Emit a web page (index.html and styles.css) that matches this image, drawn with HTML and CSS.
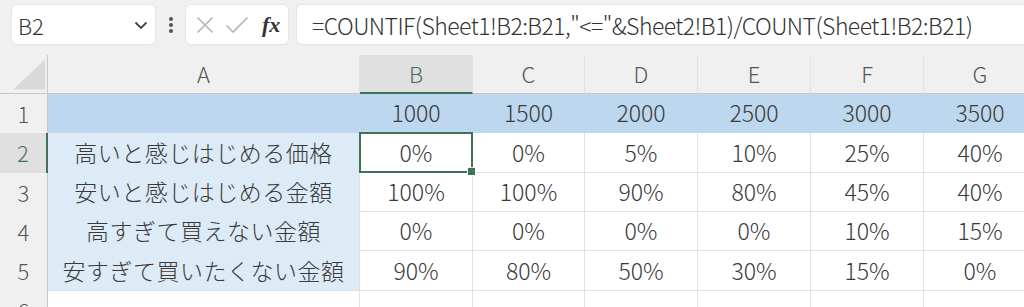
FILE: index.html
```html
<!DOCTYPE html>
<html lang="ja">
<head>
  <meta charset="UTF-8">
  <title>Sheet2</title>
  <link rel="stylesheet" href="styles.css">
</head>
<body>
  <div class="toolbar">
    <div class="namebox">
      <span class="cell-ref">B2</span>
      <svg class="chevron" width="14" height="9" viewBox="0 0 14 9"><path d="M1.5 1.5 L7 7 L12.5 1.5" fill="none" stroke="#444" stroke-width="1.8"/></svg>
    </div>
    <div class="more">
      <svg width="6" height="18" viewBox="0 0 6 18"><circle cx="3" cy="3" r="2" fill="#555"/><circle cx="3" cy="9" r="2" fill="#555"/><circle cx="3" cy="15" r="2" fill="#555"/></svg>
    </div>
    <div class="fxbox">
      <svg width="18" height="18" viewBox="0 0 18 18"><path d="M1.5 1.5 L16.5 16.5 M16.5 1.5 L1.5 16.5" stroke="#b5b5b5" stroke-width="1.6"/></svg>
      <svg width="24" height="18" viewBox="0 0 24 18"><path d="M1.5 9.5 L8 16 L22.5 1.5" fill="none" stroke="#b5b5b5" stroke-width="1.6"/></svg>
      <span class="fx">fx</span>
    </div>
    <div class="formula">=COUNTIF(Sheet1!B2:B21,"&lt;="&amp;Sheet2!B1)/COUNT(Sheet1!B2:B21)</div>
  </div>

  <div class="sheet">
    <div class="corner">
      <svg width="33" height="31" viewBox="0 0 33 31"><polygon points="33,0 33,31 0,31" fill="#d9d9d9"/></svg>
    </div>
    <div class="colhead">A</div>
    <div class="colhead selected">B</div>
    <div class="colhead">C</div>
    <div class="colhead">D</div>
    <div class="colhead">E</div>
    <div class="colhead">F</div>
    <div class="colhead">G</div>

    <div class="rowhead">1</div>
    <div class="cell band"></div>
    <div class="cell band">1000</div>
    <div class="cell band">1500</div>
    <div class="cell band">2000</div>
    <div class="cell band">2500</div>
    <div class="cell band">3000</div>
    <div class="cell band">3500</div>

    <div class="rowhead selected">2</div>
    <div class="cell label">高いと感じはじめる価格</div>
    <div class="cell active">0%</div>
    <div class="cell">0%</div>
    <div class="cell">5%</div>
    <div class="cell">10%</div>
    <div class="cell">25%</div>
    <div class="cell">40%</div>

    <div class="rowhead">3</div>
    <div class="cell label">安いと感じはじめる金額</div>
    <div class="cell">100%</div>
    <div class="cell">100%</div>
    <div class="cell">90%</div>
    <div class="cell">80%</div>
    <div class="cell">45%</div>
    <div class="cell">40%</div>

    <div class="rowhead">4</div>
    <div class="cell label">高すぎて買えない金額</div>
    <div class="cell">0%</div>
    <div class="cell">0%</div>
    <div class="cell">0%</div>
    <div class="cell">0%</div>
    <div class="cell">10%</div>
    <div class="cell">15%</div>

    <div class="rowhead">5</div>
    <div class="cell label last">安すぎて買いたくない金額</div>
    <div class="cell">90%</div>
    <div class="cell">80%</div>
    <div class="cell">50%</div>
    <div class="cell">30%</div>
    <div class="cell">15%</div>
    <div class="cell">0%</div>

    <div class="rowhead">6</div>
    <div class="cell"></div>
    <div class="cell"></div>
    <div class="cell"></div>
    <div class="cell"></div>
    <div class="cell"></div>
    <div class="cell"></div>
    <div class="cell"></div>
  </div>
</body>
</html>
```

FILE: styles.css
```css
:root {
  --grid: #e1e1e1;
  --head-bg: #f0f0f0;
  --text: #3a3a3a;
  --green: #3f7356;
}

body {
  margin: 0;
  width: 1024px;
  height: 307px;
  overflow: hidden;
  background: var(--head-bg);
  font-family: "Noto Sans CJK JP", "Noto Sans", sans-serif;
  font-weight: 300;
  color: var(--text);
}

/* formula bar */
.toolbar {
  display: flex;
  align-items: center;
  height: 39px;
  padding: 5px 0 11px 12px;
}

.namebox,
.fxbox,
.formula {
  height: 39px;
  box-sizing: border-box;
  background: #fff;
  border-radius: 5px;
  box-shadow: 0 0 0 1px #e6e6e6, 0 1px 2px rgba(0, 0, 0, 0.06);
  display: flex;
  align-items: center;
}

.namebox {
  width: 143px;
  padding: 0 7px 0 6px;
  justify-content: space-between;
}

.cell-ref {
  font-size: 22px;
  color: #333;
}

.chevron {
  margin-top: 2px;
}

.more {
  width: 31px;
  display: flex;
  justify-content: center;
}

.fxbox {
  width: 102px;
  padding: 0 6px 0 10px;
  gap: 11px;
}

.fx {
  font-family: "Liberation Serif", "DejaVu Serif", serif;
  font-style: italic;
  font-weight: bold;
  font-size: 22px;
  color: #333;
  margin-left: 2px;
}

.formula {
  flex: 1;
  margin-left: 9px;
  margin-right: -10px;
  padding-left: 15px;
  font-size: 23px;
  color: #333;
  white-space: nowrap;
  letter-spacing: -0.55px;
}

/* sheet grid */
.sheet {
  display: grid;
  grid-template-columns: 48px 312px 113px 112px 113px 113px 113px 113px;
  grid-template-rows: 39px 39px 40px 39px 39px 40px 40px;
  width: 1063px;
}

.corner {
  background: var(--head-bg);
  border-bottom: 1px solid #c8c8c8;
  border-right: 1px solid #c8c8c8;
  display: flex;
  align-items: flex-end;
  padding: 0 2px 3px 13px;
}

.colhead {
  background: var(--head-bg);
  border-bottom: 1px solid #c8c8c8;
  border-right: 1px solid #e2e2e2;
  display: flex;
  align-items: center;
  justify-content: center;
  font-size: 22px;
  color: #555;
  padding-bottom: 2px;
}

.colhead.selected {
  background: #e0e0e0;
  border-bottom: 2px solid var(--green);
  color: var(--green);
}

.rowhead {
  background: var(--head-bg);
  border-right: 1px solid #c8c8c8;
  display: flex;
  align-items: center;
  justify-content: center;
  font-size: 22px;
  color: #555;
  padding-bottom: 2px;
}

.rowhead.selected {
  background: #e0e0e0;
  border-right: 2px solid var(--green);
  color: var(--green);
}

.colhead,
.rowhead,
.corner,
.cell {
  box-sizing: border-box;
}

.cell {
  background: #fff;
  border-right: 1px solid var(--grid);
  border-bottom: 1px solid var(--grid);
  display: flex;
  align-items: center;
  justify-content: center;
  font-size: 23px;
  color: var(--text);
  white-space: nowrap;
  padding-bottom: 2px;
}

.cell.band {
  background: #bdd7ee;
  border-color: #bdd7ee;
}

.cell.label {
  background: #ddebf7;
  border-right-color: var(--grid);
  border-bottom-color: #ddebf7;
  letter-spacing: 0.5px;
}

.cell.label.last {
  border-bottom-color: var(--grid);
}

.cell.active {
  position: relative;
}

.cell.active::before {
  content: "";
  position: absolute;
  inset: -1px -1px -1px -1px;
  border: 2px solid var(--green);
}

.cell.active::after {
  content: "";
  position: absolute;
  right: -4px;
  bottom: -4px;
  width: 7px;
  height: 7px;
  background: var(--green);
  border: 1px solid #fff;
}
```
